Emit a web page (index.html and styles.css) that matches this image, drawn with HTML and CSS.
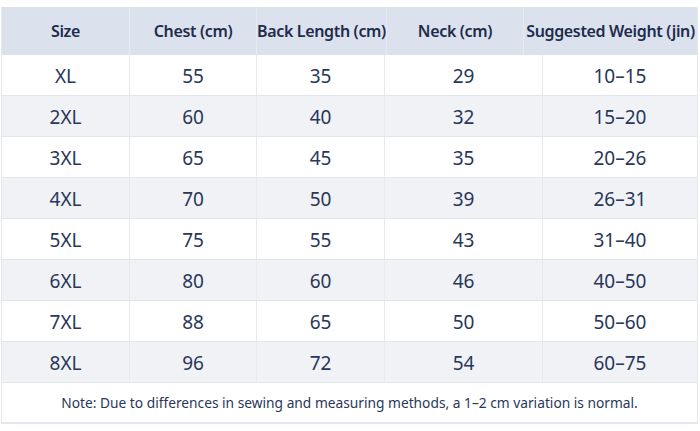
FILE: index.html
```html
<!DOCTYPE html>
<html lang="en">
<head>
<meta charset="utf-8">
<title>Size Chart</title>
<link rel="stylesheet" href="styles.css">
</head>
<body>
<div class="chart">
  <div class="head">
    <div class="hc">Size</div>
    <div class="hc">Chest (cm)</div>
    <div class="hc">Back Length (cm)</div>
    <div class="hc">Neck (cm)</div>
    <div class="hc">Suggested Weight (jin)</div>
  </div>
  <div class="row"><div class="c">XL</div><div class="c">55</div><div class="c">35</div><div class="c">29</div><div class="c">10–15</div></div>
  <div class="row alt"><div class="c">2XL</div><div class="c">60</div><div class="c">40</div><div class="c">32</div><div class="c">15–20</div></div>
  <div class="row"><div class="c">3XL</div><div class="c">65</div><div class="c">45</div><div class="c">35</div><div class="c">20–26</div></div>
  <div class="row alt"><div class="c">4XL</div><div class="c">70</div><div class="c">50</div><div class="c">39</div><div class="c">26–31</div></div>
  <div class="row"><div class="c">5XL</div><div class="c">75</div><div class="c">55</div><div class="c">43</div><div class="c">31–40</div></div>
  <div class="row alt"><div class="c">6XL</div><div class="c">80</div><div class="c">60</div><div class="c">46</div><div class="c">40–50</div></div>
  <div class="row"><div class="c">7XL</div><div class="c">88</div><div class="c">65</div><div class="c">50</div><div class="c">50–60</div></div>
  <div class="row alt"><div class="c">8XL</div><div class="c">96</div><div class="c">72</div><div class="c">54</div><div class="c">60–75</div></div>
  <div class="note">Note: Due to differences in sewing and measuring methods, a 1–2 cm variation is normal.</div>
</div>
</body>
</html>
```

FILE: styles.css
```css
html, body {
  margin: 0;
  padding: 0;
  background: #ffffff;
}
body {
  font-family: "Noto Sans", "Open Sans", sans-serif;
  color: #28375a;
}
.chart {
  margin: 7px 2px 0 1px;
  width: 697px;
  border: 1px solid #e4e8ee;
  border-top: none;
  box-sizing: border-box;
}
.head {
  display: grid;
  grid-template-columns: 127px 127px 130px 137px 1fr;
  height: 48px;
  background: #dbe2ed;
}
.hc {
  display: flex;
  align-items: center;
  justify-content: center;
  font-size: 16px;
  font-weight: 600;
  color: #1d2c4c;
  border-left: 1px solid #e6ebf3;
  letter-spacing: -0.35px;
}
.hc:first-child { border-left: none; }
.row {
  display: grid;
  grid-template-columns: 127px 127px 128px 158px 1fr;
  height: 41px;
  border-bottom: 1px solid #e3e7ed;
  box-sizing: border-box;
  background: #ffffff;
}
.row.alt { background: #f0f2f6; }
.c {
  display: flex;
  align-items: center;
  justify-content: center;
  font-size: 19px;
  padding-top: 2px;
  border-left: 1px solid #e6e9ee;
}
.c:first-child { border-left: none; }
.note {
  height: 40px;
  display: flex;
  align-items: center;
  justify-content: center;
  font-size: 13.75px;
  color: #28375a;
  border-bottom: 1px solid #e4e8ee;
  box-sizing: border-box;
}
```
